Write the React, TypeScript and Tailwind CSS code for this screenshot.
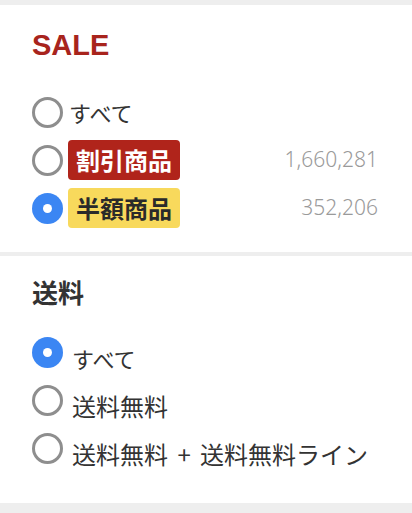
const font = { fontFamily: '"Noto Sans", "Noto Sans CJK JP", sans-serif' };

const Radio = ({ checked }: { checked?: boolean }) => {
    if (checked) {
        return (
            <div className="w-[31px] h-[31px] shrink-0 rounded-full bg-[#3b86f3] grid place-items-center">
                <div className="w-[9px] h-[9px] rounded-full bg-white"></div>
            </div>
        );
    }
    return <div className="w-[31px] h-[31px] shrink-0 rounded-full border-[3px] border-[#8e8e8e] bg-white"></div>;
};

const App = () => {
    return (
        <div
            className="w-[412px] h-[513px] bg-[#eeeeee] pt-[5px] flex flex-col gap-[4px] overflow-hidden"
            style={{ fontFamily: '"Noto Sans CJK JP", "Noto Sans", sans-serif' }}>
            {/* SALE */}
            <div className="bg-white h-[247px] pl-[32px] pr-[34px] pt-[20px]">
                <div
                    className="h-[40px] leading-[40px] text-[29px] font-bold text-[#a8241d]"
                    style={{ fontFamily: '"Liberation Sans", Arial, sans-serif' }}>SALE</div>
                <div className="mt-[23px] flex flex-col">
                    <div className="h-[48px] flex items-center">
                        <Radio />
                        <span className="ml-[6px] text-[22px] text-[#333]">すべて</span>
                    </div>
                    <div className="h-[48px] flex items-center">
                        <Radio />
                        <span
                            className="ml-[5px] h-[40px] w-[112px] rounded-[4px] bg-[#b0241b] text-white text-[24px] font-bold leading-[40px] text-center">割引商品</span>
                        <span className="ml-auto text-[21px] text-[#9a9a9a] font-light" style={font}>1,660,281</span>
                    </div>
                    <div className="h-[48px] flex items-center">
                        <Radio checked />
                        <span
                            className="ml-[5px] h-[40px] w-[112px] rounded-[4px] bg-[#f8d95c] text-[#2a2a2a] text-[24px] font-bold leading-[40px] text-center">半額商品</span>
                        <span className="ml-auto text-[21px] text-[#9a9a9a] font-light" style={font}>352,206</span>
                    </div>
                </div>
            </div>

            {/* 送料 */}
            <div className="bg-white h-[247px] pl-[32px] pr-[34px] pt-[16px]">
                <div className="h-[40px] leading-[40px] text-[26px] font-bold text-[#333]">送料</div>
                <div className="mt-[16px] flex flex-col">
                    <div className="h-[48px] flex items-center">
                        <Radio checked />
                        <span className="ml-[9px] pt-[12px] text-[22px] text-[#333]">すべて</span>
                    </div>
                    <div className="h-[48px] flex items-center">
                        <Radio />
                        <span className="ml-[9px] pt-[12px] text-[24px] text-[#333]">送料無料</span>
                    </div>
                    <div className="h-[48px] flex items-center">
                        <Radio />
                        <span className="ml-[9px] pt-[12px] text-[24px] text-[#333] whitespace-nowrap [word-spacing:4px]">送料無料 + 送料無料ライン</span>
                    </div>
                </div>
            </div>
        </div>
    );
};

export default App;
